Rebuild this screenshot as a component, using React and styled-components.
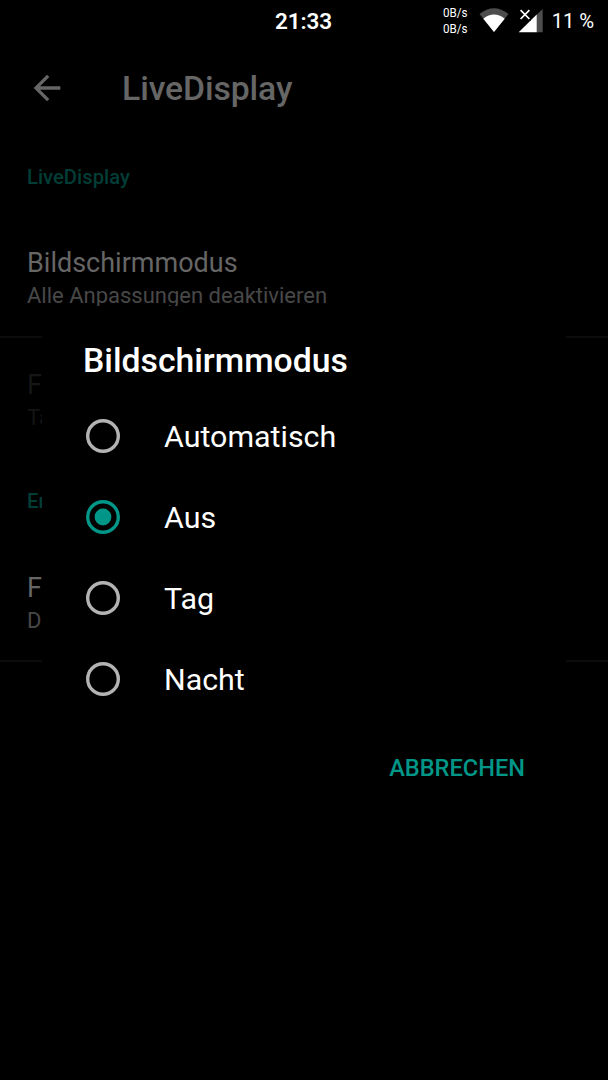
import React from 'react'
import styled, { createGlobalStyle } from 'styled-components'

const GlobalStyle = createGlobalStyle`
  * {
    box-sizing: border-box;
  }
  body {
    margin: 0;
    background: #000;
    font-family: Roboto, "Liberation Sans", sans-serif;
  }
`;
const Screen = styled.div`
  position: relative;
  width: 608px;
  height: 1080px;
  overflow: hidden;
  background: #000;
`;
const StatusBar = styled.header`
  display: grid;
  grid-template-columns: 1fr auto 1fr;
  align-items: center;
  height: 42px;
  padding-right: 14px;
  padding-left: 13px;
  color: #fff;
`;
const Clock = styled.div`
  grid-column: 2;
  font-size: 22.5px;
  font-weight: 600;
  line-height: 42px;
  letter-spacing: -0.1px;
`;
const StatusIcons = styled.div`
  display: flex;
  align-items: center;
  justify-content: flex-end;
`;
const Traffic = styled.div`
  margin: 0 11px 2px 0;
  font-size: 13.5px;
  line-height: 16px;
  transform: scaleX(0.86);
  transform-origin: right;
`;
const Wifi = styled.svg`
  width: 30px;
  height: 26px;
  margin-right: 9px;
`;
const Signal = styled.svg`
  width: 26px;
  height: 26px;
  margin-right: 8px;
`;
const Battery = styled.div`
  font-size: 20.25px;
  letter-spacing: -0.1px;
  white-space: nowrap;
`;
const Toolbar = styled.div`
  display: flex;
  align-items: center;
  height: 94px;
  padding-left: 27px;
  color: #666;
`;
const BackIcon = styled.svg`
  width: 40px;
  height: 40px;
  margin: 0 55px 2px 0;
`;
const PageTitle = styled.h1`
  margin: 0;
  font-size: 33.75px;
  font-weight: 500;
  line-height: 40px;
  letter-spacing: -0.1px;
`;
const Category = styled.div`
  height: 81px;
  padding: 29px 27px 0;
  color: #003d36;
  font-size: 20.25px;
  font-weight: 500;
  line-height: 24px;
`;
const Preference = styled.div`
  height: ${props => props.$height}px;
  padding: ${props => props.$top}px 27px 0;
  border-bottom: ${props => (props.$divider ? '2px solid #0c0c0c' : 'none')};
  color: ${props => (props.$disabled ? '#141716' : '#666')};
`;
const PreferenceTitle = styled.div`
  font-size: 27px;
  line-height: 32px;
`;
const Summary = styled.div`
  color: ${props => (props.$disabled ? '#141414' : '#484848')};
  font-size: 22px;
  line-height: 33px;
`;
const Dialog = styled.section`
  position: absolute;
  top: 306px;
  left: 42px;
  width: 524px;
  height: 501px;
  display: flex;
  flex-direction: column;
  padding: 35px 41px 0;
  background: #000;
  color: #fff;
`;
const DialogTitle = styled.h2`
  margin: 0 0 14px;
  font-size: 33.75px;
  font-weight: 500;
  line-height: 40px;
`;
const Option = styled.div`
  display: flex;
  align-items: center;
  height: 81px;
  padding-left: 3px;
`;
const Label = styled.span`
  padding-top: 2px;
  font-size: 30.4px;
`;
const Radio = styled.svg`
  width: 34px;
  height: 34px;
  margin-right: 44px;
  color: ${props => (props.$checked ? '#009688' : '#b3b3b3')};
`;
const CancelButton = styled.button`
  align-self: flex-end;
  margin: 35px 0 0;
  padding: 0;
  border: none;
  background: none;
  color: #009688;
  font-family: inherit;
  font-size: 23.6px;
  font-weight: 500;
  line-height: 28px;
  text-transform: uppercase;
`;

const modes = ['Automatisch', 'Aus', 'Tag', 'Nacht']

const App = () => {
  const [selected, setSelected] = React.useState('Aus')

  return (
    <Screen>
      <GlobalStyle />
      <StatusBar>
        <Clock>21:33</Clock>
        <StatusIcons>
          <Traffic>
            <div>0B/s</div>
            <div>0B/s</div>
          </Traffic>
          <Wifi viewBox="0 0 30 26">
            <path d="M.5 6Q15-5.5 29.5 6L15 24Z" fill="#4d4d4d" />
            <path d="M4.3 10.8Q15 2.4 25.7 10.8L15 24Z" fill="#fff" />
          </Wifi>
          <Signal viewBox="0 0 26 26">
            <path d="M24.7 1V24.3H18V7.3Z" fill="#4d4d4d" />
            <path d="M18.7 6.6V24.3H.7Z" fill="#fff" />
            <path d="M0 0H12.8V12.5H0Z" fill="#000" />
            <path d="M2.6 2.2L11.4 11M11.4 2.2L2.6 11" stroke="#fff" strokeWidth="1.7" />
          </Signal>
          <Battery>11 %</Battery>
        </StatusIcons>
      </StatusBar>

      <Toolbar>
        <BackIcon viewBox="0 0 24 24">
          <path d="M20 11H7.83l5.59-5.59L12 4l-8 8 8 8 1.41-1.41L7.83 13H20v-2z" fill="currentColor" />
        </BackIcon>
        <PageTitle>LiveDisplay</PageTitle>
      </Toolbar>

      <Category>LiveDisplay</Category>
      <Preference $height={121} $top={30} $divider>
        <PreferenceTitle>Bildschirmmodus</PreferenceTitle>
        <Summary>Alle Anpassungen deaktivieren</Summary>
      </Preference>
      <Preference $height={122} $top={31} $disabled>
        <PreferenceTitle>F</PreferenceTitle>
        <Summary $disabled>Ta</Summary>
      </Preference>
      <Category>Er</Category>
      <Preference $height={121} $top={31} $divider>
        <PreferenceTitle>F</PreferenceTitle>
        <Summary>D</Summary>
      </Preference>

      <Dialog>
        <DialogTitle>Bildschirmmodus</DialogTitle>
        {modes.map(mode => (
          <Option key={mode} onClick={() => setSelected(mode)}>
            <Radio viewBox="0 0 34 34" $checked={mode === selected}>
              <circle cx="17" cy="17" r="15.3" fill="none" stroke="currentColor" strokeWidth="3.4" />
              {mode === selected && <circle cx="17" cy="17" r="8.4" fill="currentColor" />}
            </Radio>
            <Label>{mode}</Label>
          </Option>
        ))}
        <CancelButton>Abbrechen</CancelButton>
      </Dialog>
    </Screen>
  )
}

export default App
